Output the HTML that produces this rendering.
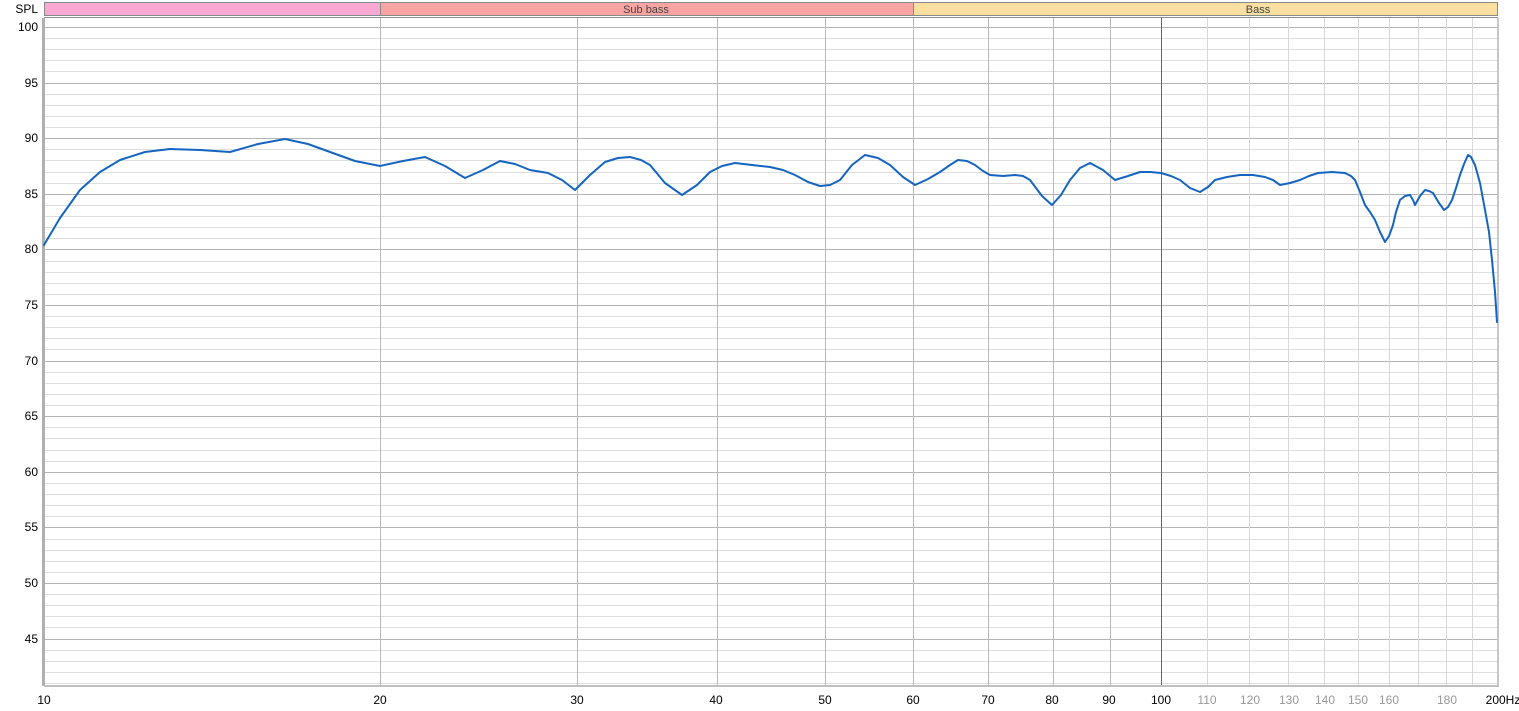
<!DOCTYPE html>
<html><head><meta charset="utf-8"><style>
html,body{margin:0;padding:0;background:#fff;width:1519px;height:711px;overflow:hidden}
svg{display:block;font-family:"Liberation Sans",sans-serif}
</style></head><body>
<svg id="s" width="1519" height="711" viewBox="0 0 1519 711">
<rect x="0" y="0" width="1519" height="711" fill="#fff"/>
<rect x="44.5" y="2.5" width="336" height="13" fill="#f9a8d4" stroke="#8a8a8a"/>
<rect x="380.5" y="2.5" width="533" height="13" fill="#f8a4a2" stroke="#8a8a8a"/>
<rect x="913.5" y="2.5" width="584" height="13" fill="#f9e0a0" stroke="#8a8a8a"/>
<text x="646" y="13" font-size="11" text-anchor="middle" fill="#444">Sub bass</text>
<text x="1258" y="13" font-size="11" text-anchor="middle" fill="#444">Bass</text>
<text x="38" y="13" font-size="12" text-anchor="end" fill="#000">SPL</text>
<g id="grid"></g>
<script>
var ns="http://www.w3.org/2000/svg",g=document.getElementById("grid");
function ln(x1,y1,x2,y2,c){var l=document.createElementNS(ns,"line");l.setAttribute("x1",x1);l.setAttribute("y1",y1);l.setAttribute("x2",x2);l.setAttribute("y2",y2);l.setAttribute("stroke",c);g.appendChild(l);}
for(var dd=41;dd<=100;dd++){var y=Math.round(27+(100-dd)*11.12)+0.5;ln(44,y,1497,y,dd%5==0?"#b4b4b4":"#dedede");}
[20,30,40,50,60,70,80,90,100,110,120,130,140,150,160,170,180,190].forEach(function(f){var x=Math.round(44+1117*Math.log10(f/10))+0.5;ln(x,17,x,685,f==100?"#666":(f>100?"#d8d8d8":"#b8b8b8"));});
</script>
<rect x="44.5" y="17.5" width="1453" height="668" fill="none" stroke="#8c8c8c"/>
<rect x="42" y="18" width="3" height="668" fill="#b0b0b0"/>
<rect x="1497" y="18" width="2" height="668" fill="#c8c8c8"/>
<rect x="44" y="685" width="1455" height="2" fill="#c0c0c0"/>
<g font-size="12" fill="#000" text-anchor="end">
<text x="38" y="31">100</text><text x="38" y="87">95</text><text x="38" y="142">90</text><text x="38" y="198">85</text><text x="38" y="253">80</text><text x="38" y="309">75</text><text x="38" y="365">70</text><text x="38" y="420">65</text><text x="38" y="476">60</text><text x="38" y="531">55</text><text x="38" y="587">50</text><text x="38" y="643">45</text>
</g>
<g font-size="12" text-anchor="middle" fill="#000">
<text x="44" y="704">10</text><text x="380" y="704">20</text><text x="577" y="704">30</text><text x="716" y="704">40</text><text x="825" y="704">50</text><text x="913" y="704">60</text><text x="988" y="704">70</text><text x="1052" y="704">80</text><text x="1109" y="704">90</text><text x="1161" y="704">100</text>
<g fill="#999"><text x="1207" y="704">110</text><text x="1250" y="704">120</text><text x="1289" y="704">130</text><text x="1325" y="704">140</text><text x="1358" y="704">150</text><text x="1389" y="704">160</text><text x="1447" y="704">180</text></g>
<text x="1503" y="704">200Hz</text>
</g>
<polyline fill="none" stroke="#1565c0" stroke-width="2" stroke-linejoin="round" stroke-linecap="round" points="44,245 60,218 80,190 100,172 120,160 145,152 170,149 200,150 230,152 258,144 285,139 308,144 330,152 355,161 380,166 403,161 425,157 445,166 465,178 483,170 500,161 515,164 530,170 548,173 562,180 575,190 590,175 605,162 618,158 630,157 641,160 650,165 665,183 682,195 697,185 710,172 722,166 735,163 752,165 770,167 783,170 795,175 808,182 820,186 830,185 840,180 852,165 865,155 878,158 890,165 903,177 915,185 928,179 940,172 950,165 958,160 967,161 975,165 983,171 990,175 1003,176 1015,175 1023,176 1030,180 1042,196 1052,205 1061,195 1070,180 1080,168 1090,163 1103,170 1115,180 1128,176 1140,172 1150,172 1161,173 1171,176 1180,180 1190,188 1200,192 1208,187 1215,180 1227,177 1240,175 1253,175 1265,177 1273,180 1280,185 1290,183 1300,180 1309,176 1318,173 1332,172 1345,173 1351,176 1355,180 1360,192 1365,205 1370,212 1375,220 1380,232 1385,242 1389,236 1393,225 1396,212 1400,200 1405,196 1410,195 1413,200 1415,205 1420,196 1425,190 1429,191 1433,193 1439,203 1444,210 1448,207 1452,200 1456,188 1460,175 1464,164 1468,155 1471,157 1475,165 1480,183 1485,210 1489,232 1492,260 1495,292 1497,322"/>
</svg>
</body></html>
